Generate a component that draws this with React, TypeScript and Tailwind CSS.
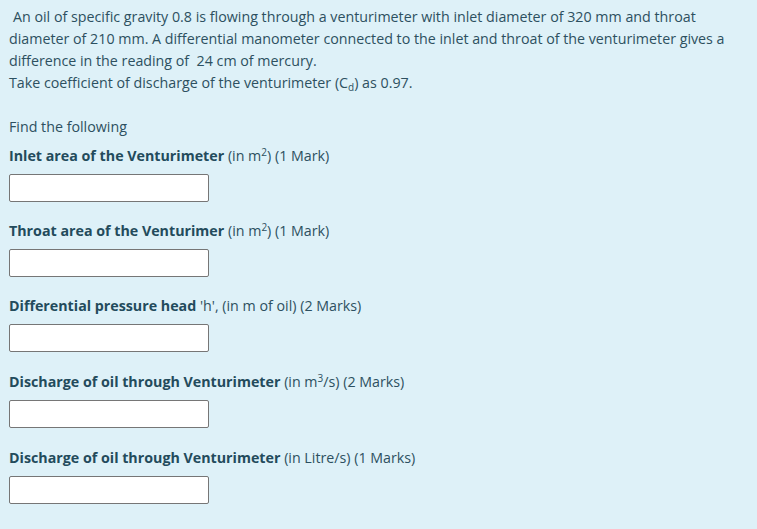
const questions = [
  { label: "Inlet area of the Venturimeter", unit: <>(in m<sup className="text-[10px] leading-none">2</sup>) (1 Mark)</>, gap: "mt-[7px]" },
  { label: "Throat area of the Venturimer", unit: <>(in m<sup className="text-[10px] leading-none">2</sup>) (1 Mark)</>, gap: "mt-[18px]" },
  { label: "Differential pressure head", unit: <>'h', (in m of oil) (2 Marks)</>, gap: "mt-[18px]" },
  { label: "Discharge of oil through Venturimeter", unit: <>(in m<sup className="text-[10px] leading-none">3</sup>/s) (2 Marks)</>, gap: "mt-[19px]" },
  { label: "Discharge of oil through Venturimeter", unit: <>(in Litre/s) (1 Marks)</>, gap: "mt-[19px]" },
]

export default function App() {
  return (
    <div className="min-h-[529px] w-[757px] bg-[#def1f8] pl-[9px] pt-[6px] font-['Open_Sans',sans-serif] text-[14.25px] leading-[22px] text-[#2d5060]">
      <p className="whitespace-nowrap">
        <span className="pl-[4px]">An oil of specific gravity 0.8 is flowing through a venturimeter with inlet diameter of 320 mm and throat</span>
        <br />
        diameter of 210 mm. A differential manometer connected to the inlet and throat of the venturimeter gives a
        <br />
        difference in the reading of&nbsp; 24 cm of mercury.
        <br />
        Take coefficient of discharge of the venturimeter (C<sub className="text-[10px] leading-none">d</sub>) as 0.97.
      </p>
      <p className="mt-[22px]">Find the following</p>
      {questions.map((q, i) => (
        <div key={i} className={q.gap}>
          <p className="h-[22px]">
            <span className="font-bold text-[#234b5c]">{q.label}</span> {q.unit}
          </p>
          <div className="mt-[7px] h-[28px] w-[200px] rounded-[2px] border border-[#767676] bg-white" />
        </div>
      ))}
    </div>
  )
}
